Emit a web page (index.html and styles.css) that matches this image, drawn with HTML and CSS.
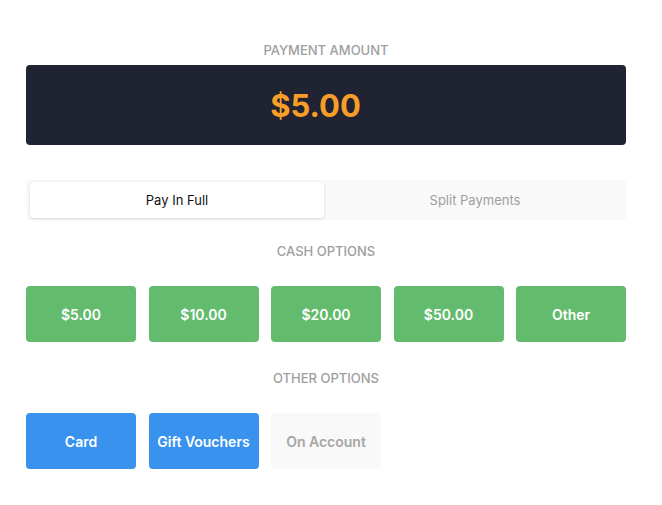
FILE: index.html
```html
<!DOCTYPE html>
<html lang="en">
<head>
  <meta charset="UTF-8" />
  <meta name="viewport" content="width=device-width, initial-scale=1.0"/>
  <title>Payment</title>
  <link rel="stylesheet" href="styles.css">
</head>
<body>
  <div class="container">
    <div class="label">Payment Amount</div>
    <div class="amount">$5.00</div>

    <div class="tabs">
      <button class="tab active">Pay In Full</button>
      <button class="tab">Split Payments</button>
    </div>

    <div class="label section">Cash Options</div>
    <div class="options">
      <button class="opt cash">$5.00</button>
      <button class="opt cash">$10.00</button>
      <button class="opt cash">$20.00</button>
      <button class="opt cash">$50.00</button>
      <button class="opt cash">Other</button>
    </div>

    <div class="label section">Other Options</div>
    <div class="options">
      <button class="opt card">Card</button>
      <button class="opt card">Gift Vouchers</button>
      <button class="opt disabled">On Account</button>
    </div>
  </div>
</body>
</html>
```

FILE: styles.css
```css
body {
  margin: 0;
  font-family: Inter, "Noto Sans", sans-serif;
  background: #ffffff;
}

.container {
  width: 600px;
  padding: 42px 26px 0;
}

.label {
  text-align: center;
  font-size: 13px;
  line-height: 16px;
  font-weight: 500;
  color: #9e9e9e;
  text-transform: uppercase;
  margin-bottom: 7px;
}

.label.section {
  margin-bottom: 27px;
}

.amount {
  height: 80px;
  background: #1f2332;
  border-radius: 4px;
  color: #f89d28;
  font-size: 31px;
  font-weight: 700;
  display: flex;
  align-items: center;
  justify-content: center;
  padding-right: 21px;
  margin-bottom: 35px;
}

.tabs {
  display: flex;
  gap: 4px;
  height: 40px;
  padding: 2px 4px;
  box-sizing: border-box;
  background: #f9f9f9;
  border-radius: 4px;
  margin-bottom: 23px;
}

.tab {
  flex: 1;
  border: none;
  background: transparent;
  font-family: inherit;
  font-size: 13px;
  color: #9e9e9e;
  border-radius: 4px;
  cursor: pointer;
}

.tab.active {
  background: white;
  color: #111;
  box-shadow: 0 1px 3px rgba(0,0,0,0.15);
}

.options {
  display: grid;
  grid-template-columns: repeat(5, 1fr);
  gap: 12.5px;
  margin-bottom: 28px;
}

.opt {
  height: 56px;
  border: none;
  border-radius: 4px;
  font-family: inherit;
  font-size: 14px;
  font-weight: 600;
  color: white;
  cursor: pointer;
}

.opt.cash {
  background: #63bb6d;
}

.opt.card {
  background: #3992ee;
}

.opt.disabled {
  background: #f9f9f9;
  color: #a6a6a6;
}
```
